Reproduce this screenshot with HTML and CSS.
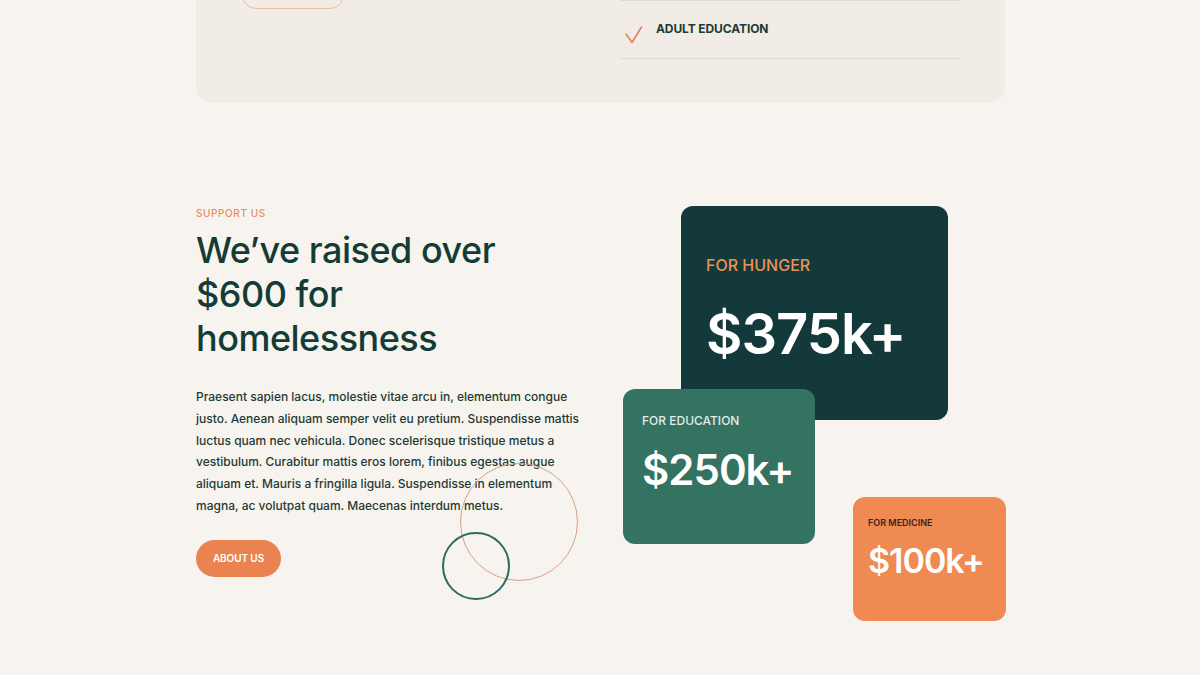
FILE: index.html
```html
<!DOCTYPE html>
<html lang="en">
<head>
<meta charset="utf-8">
<title>Support Us</title>
<link rel="stylesheet" href="styles.css">
</head>
<body>
<div class="top-card">
  <div class="top-left">
    <a class="outline-btn" href="#" aria-label="Donate"></a>
  </div>
  <ul class="check-list">
    <li class="check-item">
      <svg class="check" width="18" height="18" viewBox="0 0 18 18"><path d="M1 8 L7 16.5 L16.5 1" fill="none" stroke="#e07f52" stroke-width="1.5" stroke-linecap="round" stroke-linejoin="round"/></svg>
      <span>ADULT EDUCATION</span>
    </li>
  </ul>
</div>

<section class="support">
  <div class="support-text">
    <p class="eyebrow">SUPPORT US</p>
    <h2 class="title">We’ve raised over $600 for homelessness</h2>
    <p class="body">Praesent sapien lacus, molestie vitae arcu in, elementum congue justo. Aenean aliquam semper velit eu pretium. Suspendisse mattis luctus quam nec vehicula. Donec scelerisque tristique metus a vestibulum. Curabitur mattis eros lorem, finibus egestas augue aliquam et. Mauris a fringilla ligula. Suspendisse in elementum magna, ac volutpat quam. Maecenas interdum metus.</p>
    <a class="fill-btn" href="#">ABOUT US</a>
  </div>
  <div class="stats">
    <div class="stat stat-hunger">
      <p class="stat-label">FOR HUNGER</p>
      <p class="stat-value">$375k+</p>
    </div>
    <div class="stat stat-education">
      <p class="stat-label">FOR EDUCATION</p>
      <p class="stat-value">$250k+</p>
    </div>
    <div class="stat stat-medicine">
      <p class="stat-label">FOR MEDICINE</p>
      <p class="stat-value">$100k+</p>
    </div>
  </div>
  <span class="ring ring-orange"></span>
  <span class="ring ring-green"></span>
</section>
</body>
</html>
```

FILE: styles.css
```css
* { box-sizing: border-box; }

html, body {
  margin: 0;
  padding: 0;
}

body {
  background: #f7f4ef;
  font-family: Inter, "DejaVu Sans", sans-serif;
  color: #163c36;
  overflow: hidden;
}

p { margin: 0; }

.top-card {
  width: 809px;
  margin: 0 0 0 196px;
  background: #f1ece6;
  border-radius: 0 0 16px 16px;
  padding: 0 45px 44px 46px;
  display: grid;
  grid-template-columns: 378px 340px;
}

.outline-btn {
  display: block;
  width: 102px;
  height: 44px;
  margin-top: -35px;
  border: 1.5px solid #ecbba3;
  border-radius: 14px;
}

.check-list {
  list-style: none;
  margin: 0;
  padding: 0;
}

.check-item {
  height: 59px;
  border-top: 1.5px solid #e2dbd3;
  border-bottom: 1.5px solid #e2dbd3;
  display: flex;
  align-items: flex-start;
  gap: 13px;
  padding: 20px 0 0 5px;
  font-size: 12px;
  font-weight: 700;
  letter-spacing: -0.1px;
  color: #1d3a34;
}

.check {
  margin-top: 5px;
  flex: none;
}

.support {
  position: relative;
  width: 810px;
  margin: 103px 0 0 196px;
  display: flex;
  justify-content: space-between;
}

.support-text {
  width: 390px;
}

.eyebrow {
  font-size: 10px;
  line-height: 14px;
  font-weight: 500;
  letter-spacing: 0.6px;
  color: #e58d66;
}

.title {
  margin: 8px 0 0;
  font-size: 36px;
  line-height: 44px;
  font-weight: 500;
  letter-spacing: -0.5px;
  color: #143b35;
  width: 330px;
}

.body {
  margin-top: 26px;
  font-size: 12px;
  line-height: 21.8px;
  font-weight: 500;
  letter-spacing: 0;
  color: #1f3a34;
  width: 386px;
}

.fill-btn {
  display: inline-flex;
  align-items: center;
  justify-content: center;
  margin-top: 23px;
  width: 85px;
  height: 37px;
  border-radius: 19px;
  background: #eb8350;
  color: #fff;
  font-size: 10px;
  font-weight: 600;
  letter-spacing: -0.1px;
  text-decoration: none;
}

.stats {
  position: relative;
  width: 386px;
  height: 415px;
}

.stat {
  position: absolute;
  border-radius: 12px;
  color: #fff;
}

.stat-value {
  font-weight: 600;
  letter-spacing: -1px;
}

.stat-hunger {
  left: 61px;
  top: 0;
  width: 267px;
  height: 214px;
  background: #13393a;
  padding: 49px 0 0 25px;
}

.stat-hunger .stat-label {
  font-size: 16px;
  line-height: 20px;
  font-weight: 500;
  color: #e8925b;
}

.stat-hunger .stat-value {
  margin-top: 28px;
  font-size: 56px;
  line-height: 62px;
}

.stat-education {
  left: 3px;
  top: 183px;
  width: 192px;
  height: 155px;
  background: #347262;
  padding: 24px 0 0 19px;
}

.stat-education .stat-label {
  font-size: 12px;
  line-height: 16px;
  font-weight: 500;
  color: #e3ebe6;
}

.stat-education .stat-value {
  margin-top: 17px;
  font-size: 42px;
  line-height: 48px;
}

.stat-medicine {
  left: 233px;
  top: 291px;
  width: 153px;
  height: 124px;
  background: #ef8a52;
  padding: 20px 0 0 15px;
}

.stat-medicine .stat-label {
  font-size: 9px;
  line-height: 12px;
  font-weight: 600;
  color: #3a2418;
}

.stat-medicine .stat-value {
  margin-top: 13px;
  font-size: 34px;
  line-height: 38px;
}

.ring {
  position: absolute;
  border-radius: 50%;
  pointer-events: none;
}

.ring-orange {
  left: 264px;
  top: 257px;
  width: 118px;
  height: 118px;
  border: 1.5px solid #d6a085;
}

.ring-green {
  left: 246px;
  top: 326px;
  width: 68px;
  height: 68px;
  border: 2px solid #2e6b5e;
}
```
